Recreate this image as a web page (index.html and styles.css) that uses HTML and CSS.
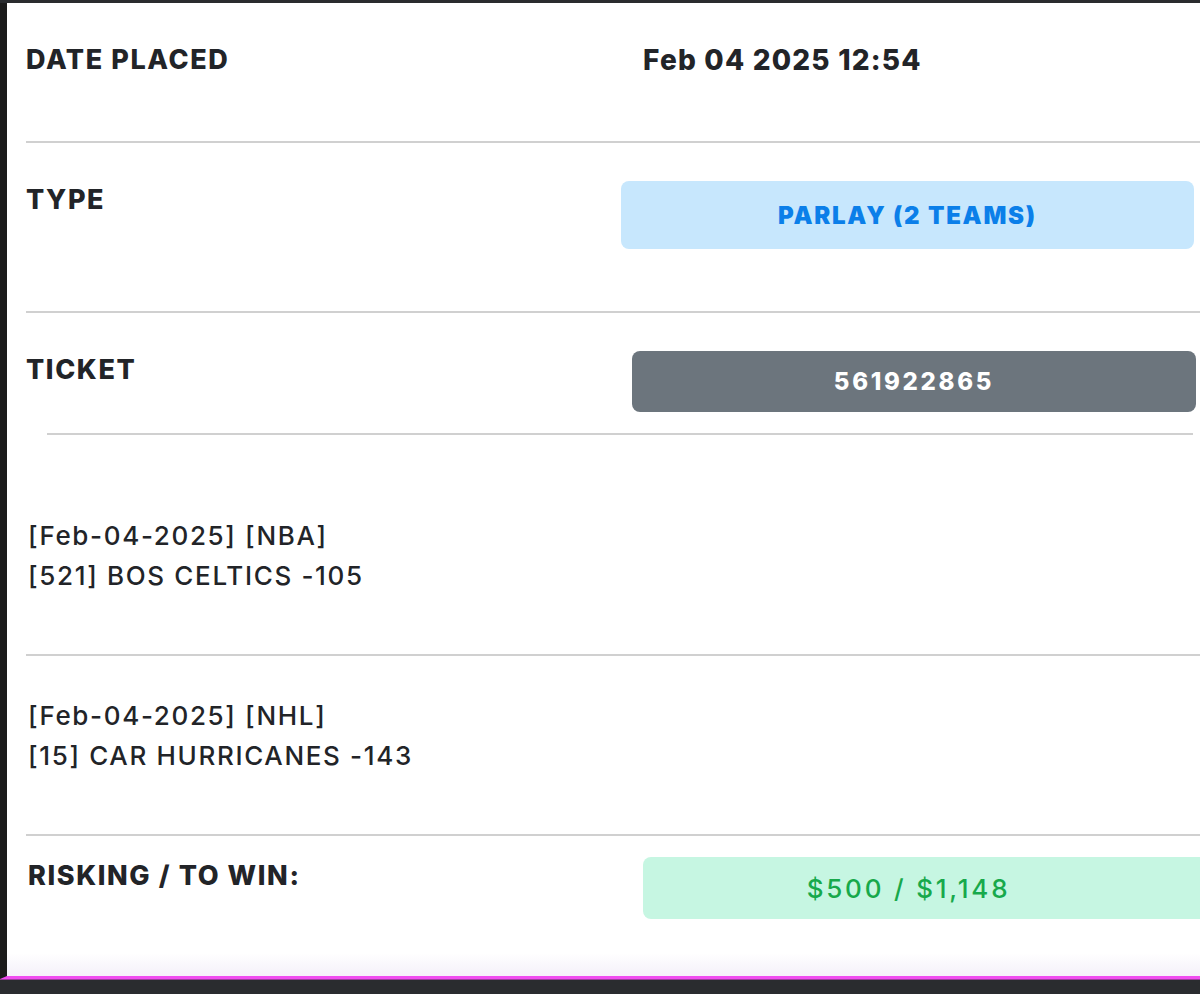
FILE: index.html
```html
<!DOCTYPE html>
<html>
<head>
<meta charset="utf-8">
<link rel="stylesheet" href="styles.css">
</head>
<body>
<div class="frame">
  <div class="panel">
    <div class="row row-date">
      <div class="label">DATE PLACED</div>
      <div class="value date-value">Feb 04 2025 12:54</div>
    </div>
    <div class="rule"></div>
    <div class="row row-type">
      <div class="label">TYPE</div>
      <div class="badge badge-blue">PARLAY (2 TEAMS)</div>
    </div>
    <div class="rule"></div>
    <div class="row row-ticket">
      <div class="label">TICKET</div>
      <div class="badge badge-gray">561922865</div>
    </div>
    <div class="rule rule-short"></div>
    <div class="leg leg-first">
      <div>[Feb-04-2025] [NBA]</div>
      <div>[521] BOS CELTICS -105</div>
    </div>
    <div class="rule"></div>
    <div class="leg leg-second">
      <div>[Feb-04-2025] [NHL]</div>
      <div>[15] CAR HURRICANES -143</div>
    </div>
    <div class="rule"></div>
    <div class="row row-risk">
      <div class="label label-risk">RISKING / TO WIN:</div>
      <div class="badge badge-green">$500 / $1,148</div>
    </div>
  </div>
</div>
</body>
</html>
```

FILE: styles.css
```css
html, body {
  margin: 0;
  padding: 0;
}
body {
  background: #2a2c2f;
  width: 1200px;
  height: 994px;
  overflow: hidden;
  font-family: Inter, "Liberation Sans", sans-serif;
  color: #222428;
}
.frame {
  padding-top: 3px;
}
.panel {
  background: #ffffff;
  border-left: 7px solid #1b1b1b;
  height: 976px;
  box-sizing: border-box;
  border-bottom: 3px solid #f04cf0;
  box-shadow: 0 1px 0 #9c3c9c;
  background-image: linear-gradient(to bottom, #ffffff 0, #ffffff 950px, #f5f1fa 972px);
  display: flex;
  flex-direction: column;
}
.row {
  display: flex;
  align-items: flex-start;
  padding-left: 19px;
}
.label {
  font-weight: 800;
  font-size: 27px;
  letter-spacing: 1.6px;
  line-height: 32px;
  width: 590px;
  flex: none;
}
.label-risk {
  padding-left: 2px;
  width: 588px;
}
.rule {
  height: 2px;
  background: #d0d0d0;
  margin-left: 19px;
}
.rule-short {
  margin-left: 40px;
  margin-right: 7px;
}
.row-date {
  height: 138px;
  padding-top: 41px;
  box-sizing: border-box;
}
.date-value {
  margin-left: 27px;
  font-weight: 800;
  font-size: 28px;
  letter-spacing: 1.2px;
  line-height: 32px;
}
.row-type {
  height: 168px;
  padding-top: 38px;
  box-sizing: border-box;
}
.row-ticket {
  height: 120px;
  padding-top: 38px;
  box-sizing: border-box;
}
.row-risk {
  padding-top: 21px;
}
.row-type .label,
.row-ticket .label,
.row-risk .label {
  margin-top: 3px;
}
.badge {
  border-radius: 8px;
  display: flex;
  align-items: center;
  justify-content: center;
  font-size: 24px;
  box-sizing: border-box;
}
.badge-blue {
  background: #c7e7fd;
  color: #0b7fe9;
  font-weight: 900;
  letter-spacing: 1.75px;
  width: 573px;
  height: 68px;
  margin-left: 5px;
}
.badge-gray {
  background: #6c757d;
  color: #ffffff;
  font-weight: 800;
  letter-spacing: 2.7px;
  width: 564px;
  height: 61px;
  margin-left: 16px;
}
.badge-green {
  background: #c6f6e2;
  color: #17a94b;
  font-weight: 500;
  font-size: 26px;
  letter-spacing: 2.8px;
  width: 566px;
  height: 62px;
  margin-left: 27px;
  padding-right: 26px;
  border-radius: 8px 0 0 8px;
}
.leg {
  padding-left: 21px;
  font-size: 26px;
  font-weight: 500;
  letter-spacing: 1.65px;
  line-height: 40px;
  box-sizing: border-box;
}
.leg-first {
  height: 219px;
  padding-top: 81px;
}
.leg-second {
  height: 178px;
  padding-top: 40px;
}
```
